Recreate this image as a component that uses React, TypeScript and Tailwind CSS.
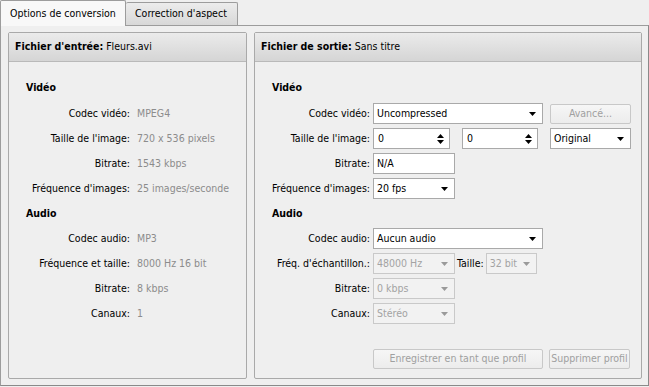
import React from "react";

const FONT = "font-['DejaVu_Sans_Condensed','DejaVu_Sans',sans-serif] text-[10.5px]";

function Arrow({ disabled }: { disabled?: boolean }) {
  return (
    <svg width="7" height="4" viewBox="0 0 7 4" className="shrink-0">
      <polygon points="0,0 7,0 3.5,4" fill={disabled ? "#9a9a9a" : "#000"} />
    </svg>
  );
}

function Spin() {
  return (
    <svg width="7" height="10" viewBox="0 0 7 10" className="shrink-0">
      <polygon points="3.5,0 7,4 0,4" fill="#000" />
      <polygon points="0,6 7,6 3.5,10" fill="#000" />
    </svg>
  );
}

function Select({ w, value, disabled }: { w: string; value: string; disabled?: boolean }) {
  return (
    <div
      className={
        w +
        " h-[21px] shrink-0 flex items-center justify-between pl-[3px] pr-[6px] border " +
        (disabled
          ? "border-[#c9c9c9] bg-[#f2f2f2] text-[#a3a3a3]"
          : "border-[#a9a9a9] bg-white text-black")
      }
    >
      <span>{value}</span>
      <Arrow disabled={disabled} />
    </div>
  );
}

function SpinBox({ w }: { w: string }) {
  return (
    <div className={w + " h-[21px] shrink-0 flex items-center justify-between pl-[4px] pr-[5px] border border-[#a9a9a9] bg-white"}>
      <span>0</span>
      <Spin />
    </div>
  );
}

function Btn({ w, label }: { w: string; label: string }) {
  return (
    <div
      className={
        w +
        " h-[20px] shrink-0 flex items-center justify-center rounded-[2px] border border-[#c8c8c8] bg-gradient-to-b from-[#f6f6f6] to-[#ececec] text-[#a0a0a0]"
      }
    >
      {label}
    </div>
  );
}

function InfoRow({ label, value }: { label: string; value: string }) {
  return (
    <div className="h-[25px] flex items-center">
      <div className="w-[121px] text-right text-black">{label}</div>
      <div className="ml-[7px] text-[#8c8c8c]">{value}</div>
    </div>
  );
}

function Heading({ children, first }: { children: React.ReactNode; first?: boolean }) {
  return (
    <div className={(first ? "h-[27px]" : "h-[25px]") + " flex items-center pl-[17px] font-bold text-black"}>
      {children}
    </div>
  );
}

function FormRow({ label, children }: { label: string; children: React.ReactNode }) {
  return (
    <div className="h-[25px] flex items-center">
      <div className="w-[115px] text-right text-black shrink-0">{label}</div>
      <div className="ml-[3px] flex items-center">{children}</div>
    </div>
  );
}

function BoxHeader({ bold, rest }: { bold: string; rest: string }) {
  return (
    <div className="h-[29px] flex items-center pl-[6px] border-b border-[#b9b9b9] bg-gradient-to-b from-[#ebebeb] to-[#d5d5d5] text-black">
      <span className="font-bold">{bold}</span>
      <span>&nbsp;{rest}</span>
    </div>
  );
}

export default function App() {
  return (
    <div className={FONT + " w-[649px] h-[387px] bg-[#efefef] text-black relative overflow-hidden"}>
      {/* tabs */}
      <div className="h-[25px] flex items-end relative z-10">
        <div className="w-[126px] h-[26px] self-start flex items-center pl-[9px] border border-b-0 border-[#9c9c9c] bg-[#f8f8f8] rounded-t-[2px] -mb-[1px]">
          Options de conversion
        </div>
        <div className="w-[112px] h-[23px] flex items-center pl-[9px] border border-l-0 border-b-0 border-[#9c9c9c] bg-gradient-to-b from-[#ececec] to-[#d8d8d8] rounded-t-[2px]">
          Correction d'aspect
        </div>
      </div>
      {/* panel */}
      <div className="h-[361px] flex border border-[#9c9c9c] border-r-[#8a8a8a] border-b-[#8a8a8a] bg-[#efefef] pl-[7px] pr-[6px] pt-[6px] pb-[6px] gap-[7px]">
        {/* left box */}
        <div className="w-[239px] flex flex-col border border-[#a9a9a9] bg-[#efefef] rounded-[2px]">
          <BoxHeader bold="Fichier d'entrée:" rest="Fleurs.avi" />
          <div className="pt-[12px] flex flex-col">
            <Heading first>Vidéo</Heading>
            <InfoRow label="Codec vidéo:" value="MPEG4" />
            <InfoRow label="Taille de l'image:" value="720 x 536 pixels" />
            <InfoRow label="Bitrate:" value="1543 kbps" />
            <InfoRow label="Fréquence d'images:" value="25 images/seconde" />
            <Heading>Audio</Heading>
            <InfoRow label="Codec audio:" value="MP3" />
            <InfoRow label="Fréquence et taille:" value="8000 Hz 16 bit" />
            <InfoRow label="Bitrate:" value="8 kbps" />
            <InfoRow label="Canaux:" value="1" />
          </div>
        </div>
        {/* right box */}
        <div className="w-[388px] flex flex-col border border-[#a9a9a9] bg-[#efefef] rounded-[2px]">
          <BoxHeader bold="Fichier de sortie:" rest="Sans titre" />
          <div className="pt-[12px] flex flex-col">
            <Heading first>Vidéo</Heading>
            <FormRow label="Codec vidéo:">
              <Select w="w-[170px]" value="Uncompressed" />
              <div className="ml-[7px]">
                <Btn w="w-[81px]" label="Avancé..." />
              </div>
            </FormRow>
            <FormRow label="Taille de l'image:">
              <SpinBox w="w-[77px]" />
              <div className="ml-[12px]">
                <SpinBox w="w-[76px]" />
              </div>
              <div className="ml-[12px]">
                <Select w="w-[81px]" value="Original" />
              </div>
            </FormRow>
            <FormRow label="Bitrate:">
              <div className="w-[82px] h-[21px] flex items-center pl-[3px] border border-[#a9a9a9] bg-white">N/A</div>
            </FormRow>
            <FormRow label="Fréquence d'images:">
              <Select w="w-[82px]" value="20 fps" />
            </FormRow>
            <Heading>Audio</Heading>
            <FormRow label="Codec audio:">
              <Select w="w-[170px]" value="Aucun audio" />
            </FormRow>
            <FormRow label="Fréq. d'échantillon.:">
              <Select w="w-[82px]" value="48000 Hz" disabled />
              <span className="ml-[2px]">Taille:</span>
              <div className="ml-[2px]">
                <Select w="w-[51px]" value="32 bit" disabled />
              </div>
            </FormRow>
            <FormRow label="Bitrate:">
              <Select w="w-[82px]" value="0 kbps" disabled />
            </FormRow>
            <FormRow label="Canaux:">
              <Select w="w-[82px]" value="Stéréo" disabled />
            </FormRow>
          </div>
          <div className="mt-auto pb-[9px] flex items-center pl-[118px]">
            <Btn w="w-[170px]" label="Enregistrer en tant que profil" />
            <div className="ml-[6px]">
              <Btn w="w-[81px]" label="Supprimer profil" />
            </div>
          </div>
        </div>
      </div>
    </div>
  );
}
